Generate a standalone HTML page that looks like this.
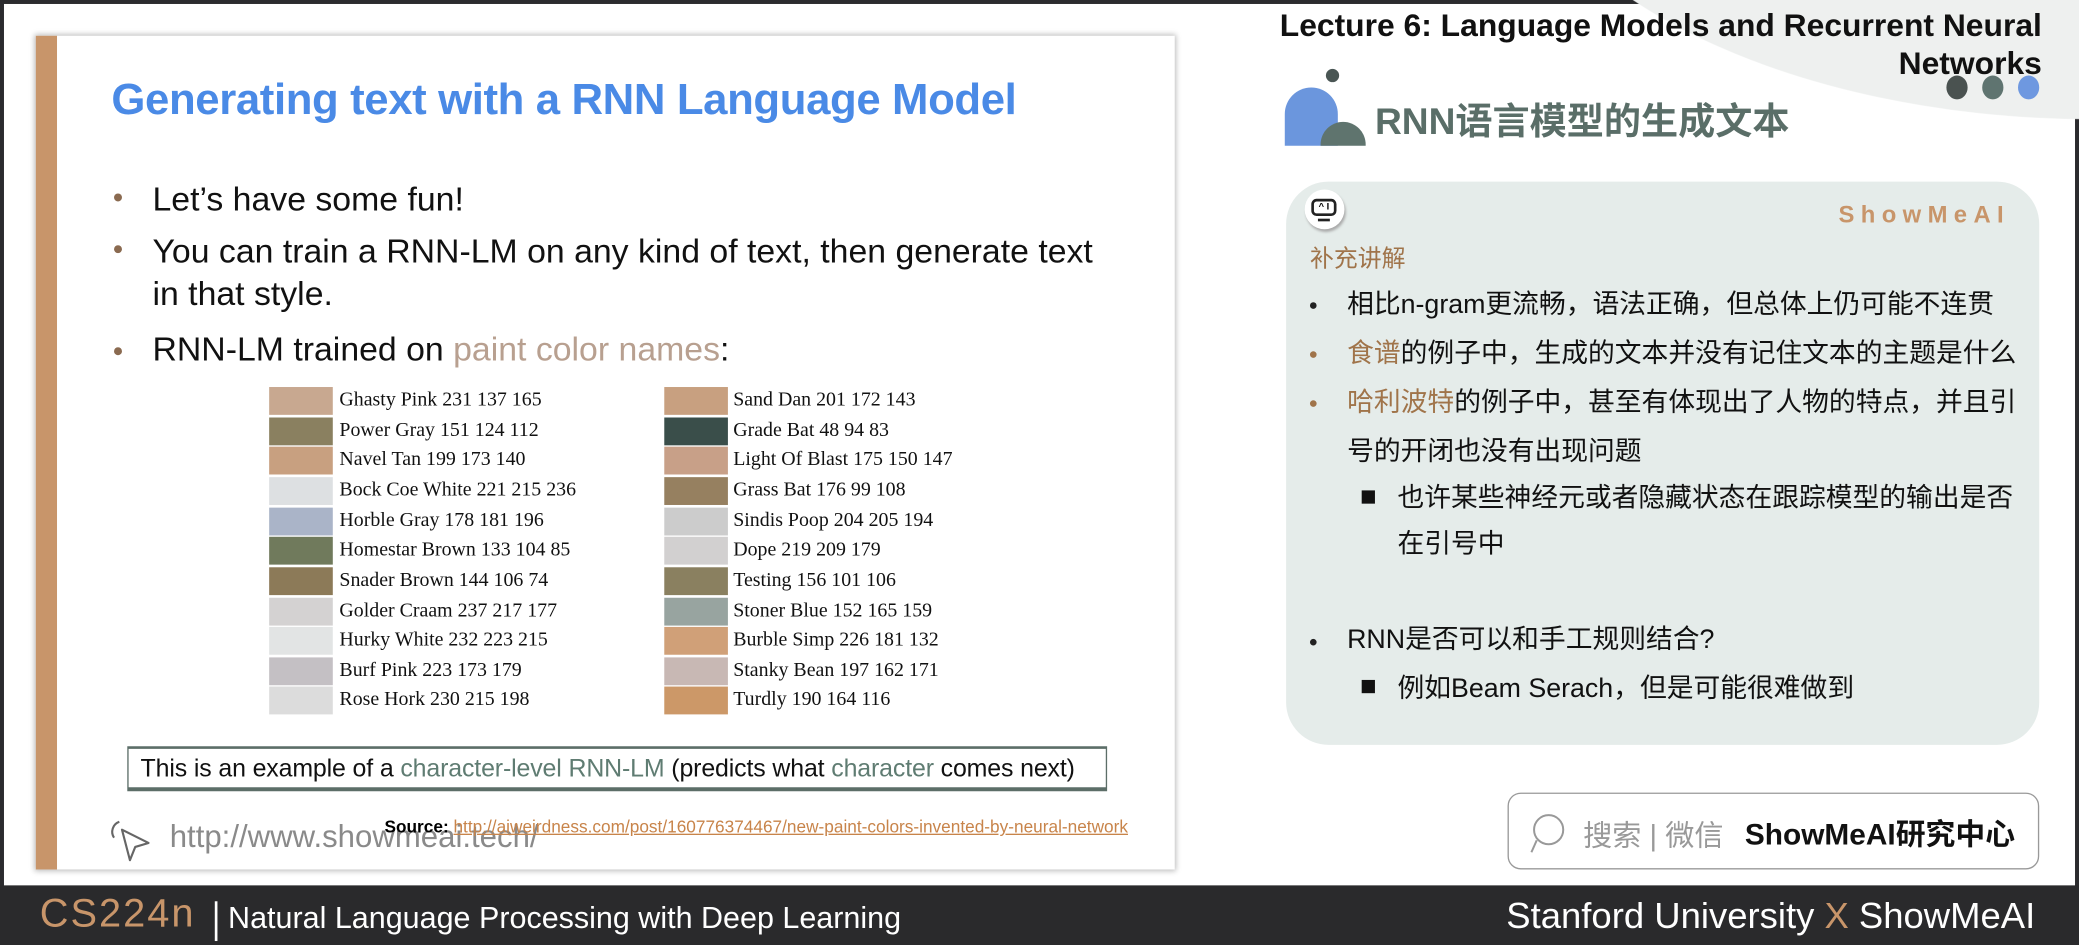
<!DOCTYPE html>
<html><head><meta charset="utf-8"><style>
*{margin:0;padding:0;box-sizing:border-box}
html,body{width:2079px;height:945px;overflow:hidden;background:#fff}
#c{position:absolute;left:0;top:0;width:1568px;height:713px;transform:scale(1.32589,1.3254);transform-origin:0 0;font-family:"Liberation Sans","Noto Sans CJK SC",sans-serif;background:#fff}
.a{position:absolute;white-space:nowrap}
.sw{position:absolute;width:48px;height:21px}
.ct{position:absolute;font-family:"Liberation Serif",serif;font-size:15px;color:#111;white-space:nowrap;line-height:21px}
.cn{font-size:20.2px;color:#111;line-height:24px}
.dot{position:absolute;width:5px;height:5px;border-radius:50%;background:#222}
.sq{position:absolute;width:10px;height:10px;background:#111}
</style></head><body><div id="c">
<div class="a" style="left:0;top:0;width:1568px;height:3px;background:#2b2b2e"></div>
<div class="a" style="left:0;top:0;width:3px;height:713px;background:#2b2b2e"></div>
<div class="a" style="left:1565px;top:0;width:3px;height:713px;background:#2b2b2e"></div>
<div class="a" style="left:1130px;top:-400px;width:900px;height:490px;border-radius:50%;background:#eef0ef"></div>
<div class="a" style="left:27px;top:27px;width:859px;height:629px;background:#fff;box-shadow:0 0 4px 1px #bbb"></div>
<div class="a" style="left:27px;top:27px;width:16px;height:629px;background:#c8956a"></div>
<div class="a" style="left:84px;top:56px;font-size:33px;font-weight:bold;color:#4a8ae6;letter-spacing:-0.3px">Generating text with a RNN Language Model</div>
<div class="a" style="left:86px;top:146px;width:6px;height:6px;border-radius:50%;background:#8a6a50"></div>
<div class="a" style="left:86px;top:185px;width:6px;height:6px;border-radius:50%;background:#8a6a50"></div>
<div class="a" style="left:86px;top:262px;width:6px;height:6px;border-radius:50%;background:#8a6a50"></div>
<div class="a" style="left:115px;top:137px;font-size:25.5px;color:#111">Let’s have some fun!</div>
<div class="a" style="left:115px;top:174px;font-size:25.5px;color:#111;line-height:32px">You can train a RNN-LM on any kind of text, then generate text<br>in that style.</div>
<div class="a" style="left:115px;top:250px;font-size:25.5px;color:#111">RNN-LM trained on <span style="color:#b8a090">paint color names</span>:</div>
<div class="sw" style="left:203px;top:292px;background:#c8a890"></div><div class="ct" style="left:256px;top:292px">Ghasty Pink 231 137 165</div>
<div class="sw" style="left:203px;top:315px;background:#8a8060"></div><div class="ct" style="left:256px;top:315px">Power Gray 151 124 112</div>
<div class="sw" style="left:203px;top:337px;background:#c8a080"></div><div class="ct" style="left:256px;top:337px">Navel Tan 199 173 140</div>
<div class="sw" style="left:203px;top:360px;background:#dde0e2"></div><div class="ct" style="left:256px;top:360px">Bock Coe White 221 215 236</div>
<div class="sw" style="left:203px;top:383px;background:#aab4c8"></div><div class="ct" style="left:256px;top:383px">Horble Gray 178 181 196</div>
<div class="sw" style="left:203px;top:405px;background:#707a5c"></div><div class="ct" style="left:256px;top:405px">Homestar Brown 133 104 85</div>
<div class="sw" style="left:203px;top:428px;background:#8c7a58"></div><div class="ct" style="left:256px;top:428px">Snader Brown 144 106 74</div>
<div class="sw" style="left:203px;top:451px;background:#d4d2d2"></div><div class="ct" style="left:256px;top:451px">Golder Craam 237 217 177</div>
<div class="sw" style="left:203px;top:473px;background:#e2e4e4"></div><div class="ct" style="left:256px;top:473px">Hurky White 232 223 215</div>
<div class="sw" style="left:203px;top:496px;background:#c4c0c4"></div><div class="ct" style="left:256px;top:496px">Burf Pink 223 173 179</div>
<div class="sw" style="left:203px;top:518px;background:#dcdcdc"></div><div class="ct" style="left:256px;top:518px">Rose Hork 230 215 198</div>
<div class="sw" style="left:501px;top:292px;background:#c8a080"></div><div class="ct" style="left:553px;top:292px">Sand Dan 201 172 143</div>
<div class="sw" style="left:501px;top:315px;background:#3a4e4a"></div><div class="ct" style="left:553px;top:315px">Grade Bat 48 94 83</div>
<div class="sw" style="left:501px;top:337px;background:#c8a088"></div><div class="ct" style="left:553px;top:337px">Light Of Blast 175 150 147</div>
<div class="sw" style="left:501px;top:360px;background:#968060"></div><div class="ct" style="left:553px;top:360px">Grass Bat 176 99 108</div>
<div class="sw" style="left:501px;top:383px;background:#cccccc"></div><div class="ct" style="left:553px;top:383px">Sindis Poop 204 205 194</div>
<div class="sw" style="left:501px;top:405px;background:#d2d0d0"></div><div class="ct" style="left:553px;top:405px">Dope 219 209 179</div>
<div class="sw" style="left:501px;top:428px;background:#8a8060"></div><div class="ct" style="left:553px;top:428px">Testing 156 101 106</div>
<div class="sw" style="left:501px;top:451px;background:#98a4a0"></div><div class="ct" style="left:553px;top:451px">Stoner Blue 152 165 159</div>
<div class="sw" style="left:501px;top:473px;background:#d0a078"></div><div class="ct" style="left:553px;top:473px">Burble Simp 226 181 132</div>
<div class="sw" style="left:501px;top:496px;background:#c8b8b4"></div><div class="ct" style="left:553px;top:496px">Stanky Bean 197 162 171</div>
<div class="sw" style="left:501px;top:518px;background:#cc9868"></div><div class="ct" style="left:553px;top:518px">Turdly 190 164 116</div>
<div class="a" style="left:96px;top:563px;width:739px;height:34px;border:2px solid #5c6e68;border-width:2px 1px 3px 1px;font-size:18.8px;color:#111;line-height:29px;padding-left:9px;letter-spacing:-0.1px">This is an example of a <span style="color:#5f7c72">character-level RNN-LM</span> (predicts what <span style="color:#5f7c72">character</span> comes next)</div>
<svg class="a" style="left:82px;top:616px" width="34" height="36" viewBox="0 0 34 36"><path d="M8 4 A8 8 0 0 0 4 16" fill="none" stroke="#666" stroke-width="1.6"/><path d="M10 10 L30 20 L20 23 L16 33 Z" fill="none" stroke="#666" stroke-width="1.6" stroke-linejoin="round"/></svg>
<div class="a" style="left:128px;top:618px;font-size:23.5px;color:#8a8a8a">http://www.showmeai.tech/</div>
<div class="a" style="left:290px;top:616px;font-size:13px;color:#000;font-weight:bold">Source: <span style="color:#c8844a;font-weight:normal;text-decoration:underline">http://aiweirdness.com/post/160776374467/new-paint-colors-invented-by-neural-network</span></div>
<div class="a" style="right:28px;top:5px;font-size:24px;color:#111;text-align:right;line-height:29px;font-weight:bold">Lecture 6: Language Models and Recurrent Neural<br>Networks</div>
<div class="a" style="left:1468px;top:57px;width:16px;height:18px;border-radius:50%;background:#4a5250"></div>
<div class="a" style="left:1495px;top:57px;width:16px;height:18px;border-radius:50%;background:#5f7470"></div>
<div class="a" style="left:1522px;top:57px;width:16px;height:18px;border-radius:50%;background:#6e98e0"></div>
<div class="a" style="left:1000px;top:52px;width:10px;height:10px;border-radius:50%;background:#4a5654"></div>
<div class="a" style="left:969px;top:66px;width:40px;height:44px;border-radius:28px 28px 0 0;background:#6b96dd"></div>
<div class="a" style="left:996px;top:92px;width:34px;height:18px;border-radius:17px 17px 0 0;background:#5f746e"></div>
<div class="a" style="left:1037px;top:70px;font-size:28px;font-weight:bold;color:#5a6e68">RNN语言模型的生成文本</div>
<div class="a" style="left:970px;top:137px;width:568px;height:425px;border-radius:32px;background:#e5ecea"></div>
<div class="a" style="left:984px;top:143px;width:30px;height:30px;border-radius:50%;background:#fff;box-shadow:1px 2px 2px #aaa"></div>
<div class="a" style="left:989px;top:150px;width:19px;height:13px;border:2px solid #222;border-radius:4px;font-size:7px;line-height:9px;text-align:center;font-weight:bold">^ I</div>
<div class="a" style="left:994px;top:165px;width:9px;height:2px;background:#222"></div>
<div class="a" style="right:52px;top:152px;font-size:18px;font-weight:bold;color:#c8956a;letter-spacing:4.8px">ShowMeAI</div>
<div class="a" style="left:988px;top:181px;font-size:18px;color:#a0744a">补充讲解</div>
<div class="dot" style="left:988px;top:228px"></div>
<div class="a cn" style="left:1016px;top:218px">相比n-gram更流畅，语法正确，但总体上仍可能不连贯</div>
<div class="dot" style="left:988px;top:265px;background:#a0744a"></div>
<div class="a cn" style="left:1016px;top:255px"><span style="color:#a0744a">食谱</span>的例子中，生成的文本并没有记住文本的主题是什么</div>
<div class="dot" style="left:988px;top:302px;background:#a0744a"></div>
<div class="a cn" style="left:1016px;top:292px"><span style="color:#a0744a">哈利波特</span>的例子中，甚至有体现出了人物的特点，并且引</div>
<div class="a cn" style="left:1016px;top:329px">号的开闭也没有出现问题</div>
<div class="sq" style="left:1027px;top:370px"></div>
<div class="a cn" style="left:1054px;top:364px">也许某些神经元或者隐藏状态在跟踪模型的输出是否</div>
<div class="a cn" style="left:1054px;top:399px">在引号中</div>
<div class="dot" style="left:988px;top:482px"></div>
<div class="a cn" style="left:1016px;top:471px">RNN是否可以和手工规则结合?</div>
<div class="sq" style="left:1027px;top:513px"></div>
<div class="a cn" style="left:1054px;top:508px">例如Beam Serach，但是可能很难做到</div>
<div class="a" style="left:1137px;top:598px;width:401px;height:58px;border:1px solid #999;border-radius:10px;background:#fff"></div>
<svg class="a" style="left:1152px;top:610px" width="36" height="36" viewBox="0 0 36 36"><circle cx="16" cy="16" r="11" fill="none" stroke="#999" stroke-width="1.5"/><path d="M7 24 L3 33" stroke="#999" stroke-width="1.5"/></svg>
<div class="a" style="left:1194px;top:613px;font-size:22px;color:#999">搜索 | 微信</div>
<div class="a" style="left:1316px;top:612px;font-size:22.5px;color:#111;font-weight:bold">ShowMeAI研究中心</div>
<div class="a" style="left:0;top:668px;width:1568px;height:45px;background:#2a2a2c"></div>
<div class="a" style="left:30px;top:673px;font-size:30px;color:#c8956a;letter-spacing:1.5px">CS224n</div>
<div class="a" style="left:162px;top:680px;width:2px;height:30px;background:#fff"></div>
<div class="a" style="left:172px;top:679px;font-size:23px;color:#fff">Natural Language Processing with Deep Learning</div>
<div class="a" style="right:33px;top:675px;font-size:27.5px;color:#fff">Stanford University <span style="color:#c8956a">X</span> ShowMeAI</div>
</div></body></html>
